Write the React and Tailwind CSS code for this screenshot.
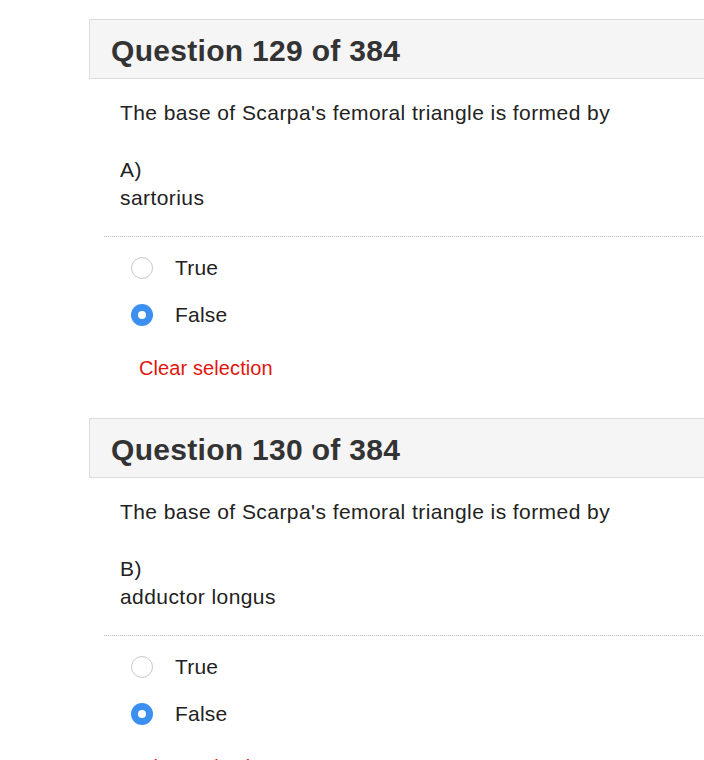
import React from "react";

function Radio({ checked }) {
  if (checked) {
    return (
      <span className="flex h-[22px] w-[22px] shrink-0 items-center justify-center rounded-full bg-[#3b8ff0]">
        <span className="h-[8px] w-[8px] rounded-full bg-white" />
      </span>
    );
  }
  return <span className="h-[22px] w-[22px] shrink-0 rounded-full border-[1.5px] border-[#c8c8c8] bg-white" />;
}

function Question({ num, letter, answer }) {
  return (
    <div className="mb-[36px]">
      <div className="flex h-[60px] items-center border border-[#dcdcdc] bg-[#f5f5f5] pl-[21px] pt-[3px]">
        <h2 className="text-[30px] font-bold leading-none tracking-[0.3px] text-[#333]">Question {num} of 384</h2>
      </div>
      <div className="pl-[31px]">
        <p className="mt-[20px] text-[21px] leading-[28px] tracking-[0.43px] text-[#222]">
          The base of Scarpa's femoral triangle is formed by
        </p>
        <p className="mt-[29px] text-[21px] leading-[28px] tracking-[0.43px] text-[#222]">
          {letter})<br />
          {answer}
        </p>
      </div>
      <div className="ml-[15px] mt-[24px] border-t border-dotted border-[#bdbdbd]" />
      <div className="pl-[42px] pt-[7px]">
        <div className="flex h-[47px] items-center gap-[22px]">
          <Radio checked={false} />
          <span className="text-[21px] tracking-[0.2px] text-[#222]">True</span>
        </div>
        <div className="flex h-[47px] items-center gap-[22px]">
          <Radio checked={true} />
          <span className="text-[21px] tracking-[0.2px] text-[#222]">False</span>
        </div>
      </div>
      <div className="mt-[16px] pl-[50px] text-[20px] leading-[28px] tracking-[0.1px] text-[#e0160f]">Clear selection</div>
    </div>
  );
}

export default function App() {
  return (
    <div
      className="h-[760px] overflow-hidden bg-white pt-[19px]"
      style={{ fontFamily: '"Liberation Sans", Arial, sans-serif' }}
    >
      <div className="ml-[89px] w-[640px]">
        <Question num={129} letter="A" answer="sartorius" />
        <Question num={130} letter="B" answer="adductor longus" />
      </div>
    </div>
  );
}
